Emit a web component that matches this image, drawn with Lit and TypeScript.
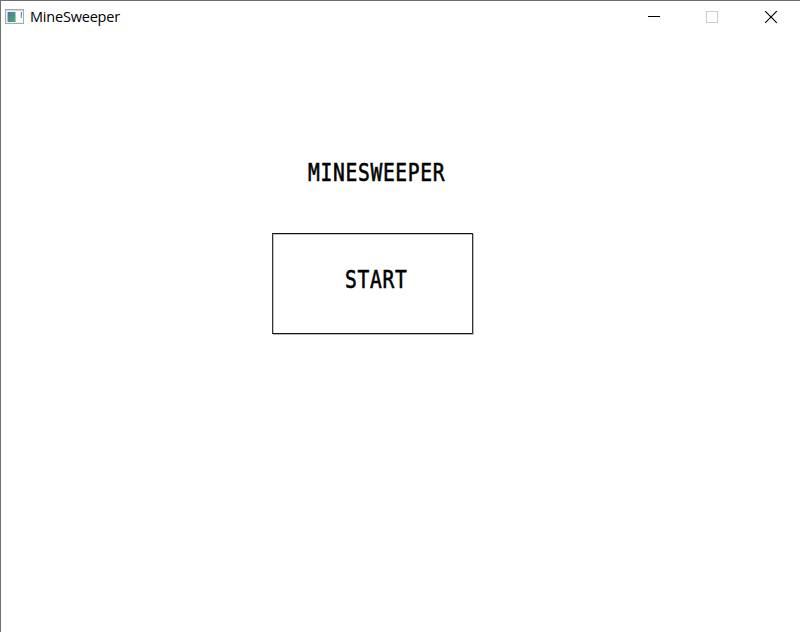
import { LitElement, html, css } from "lit";
import { customElement } from "lit/decorators.js";

@customElement("app-root")
class AppRoot extends LitElement {
  static styles = css`
    :host {
      display: flex;
      flex-direction: column;
      box-sizing: border-box;
      width: 800px;
      height: 632px;
      overflow: hidden;
      background: #fff;
      border-top: 1px solid #6e6e6e;
      border-left: 1px solid #717171;
      position: relative;
    }
    svg { display: block; }
    .edge {
      position: absolute;
      left: -1px;
      top: -1px;
    }
    .bar {
      display: flex;
      height: 32px;
      flex: none;
      align-items: center;
      padding-left: 4px;
    }
    .name {
      flex: 1;
      margin-left: 5px;
      font: 14.5px/20px "Open Sans", "Noto Sans", sans-serif;
      letter-spacing: -0.2px;
      color: #000;
    }
    .controls { display: flex; }
    .screen {
      display: flex;
      flex-direction: column;
      flex: 1;
      padding: 125px 0 0 271px;
    }
    .pixel {
      display: block;
      font: 24.5px/30px "DejaVu Sans Mono", monospace;
      letter-spacing: 0.85px;
      color: #000;
      -webkit-text-stroke: 0.6px #000;
      white-space: pre;
      transform: scaleX(0.8);
      transform-origin: 0 50%;
    }
    .title { margin-left: 35.5px; height: 30px; }
    .start {
      appearance: none;
      display: block;
      box-sizing: border-box;
      width: 201px;
      height: 101px;
      margin: 45px 0 0;
      padding: 0 0 8px 72px;
      background: #fff;
      border: 1px solid #151515;
      border-left-color: #333;
      border-right-color: #333;
      border-radius: 0 0 1px 0;
      box-shadow: 1px 1px 0 #b8b8b8, inset 1px 1px 0 #c4c4c4;
      text-align: left;
    }
  `;

  render() {
    return html`
      <svg class="edge" width="1" height="632" shape-rendering="crispEdges">
        <path stroke="#267477" d="M0 249.5h1M0 357.5h1" stroke-width="3" />
        <path stroke="#3f8083" d="M0 254.5h1M0 362.5h1" />
        <path stroke="#1d573a" d="M0 6.5h1M0 14.5h1M0 311.5h1M0 410.5h1M0 414.5h1" />
        <path stroke="#333" d="M0 419.5h1M0 616.5h1M0 622.5h1" />
      </svg>
      <div class="bar">
        <svg width="20" height="18" viewBox="5 7 20 18" shape-rendering="crispEdges">
          <defs>
            <linearGradient id="pane" x1="0" y1="0" x2="1" y2="1">
              <stop offset="0" stop-color="#4779a0" />
              <stop offset="1" stop-color="#50a878" />
            </linearGradient>
          </defs>
          <rect x="5.5" y="8.5" width="18" height="14" fill="#f2f3f4" stroke="#a5a9ac" />
          <path d="M6 9.5h17" stroke="#d4d7dc" />
          <rect x="8" y="11" width="7" height="10" fill="url(#pane)" />
          <path d="M7.5 11v10M15.5 11v10" stroke="#a9c4cc" />
          <rect x="16" y="11" width="7" height="10" fill="#fff" />
          <path d="M20.5 11v6" stroke="#dbe9e5" />
          <path d="M21.5 11v3" stroke="#5680a2" />
          <path d="M21.5 14v3" stroke="#62ad86" />
        </svg>
        <span class="name">MineSweeper</span>
        <div class="controls">
          <svg width="58" height="32" viewBox="625 1 58 32" shape-rendering="crispEdges">
            <path d="M648 16.5h12" stroke="#000" />
          </svg>
          <svg width="58" height="32" viewBox="683 1 58 32" shape-rendering="crispEdges">
            <rect x="706.5" y="11.5" width="11" height="11" fill="none" stroke="#ccc" />
          </svg>
          <svg width="59" height="32" viewBox="741 1 59 32">
            <path d="M765.2 11.2l11.6 11.6M776.8 11.2l-11.6 11.6" stroke="#000" stroke-width="1.15" />
          </svg>
        </div>
      </div>
      <main class="screen">
        <span class="pixel title">MINESWEEPER</span>
        <button class="start"><span class="pixel">START</span></button>
      </main>
    `;
  }
}
